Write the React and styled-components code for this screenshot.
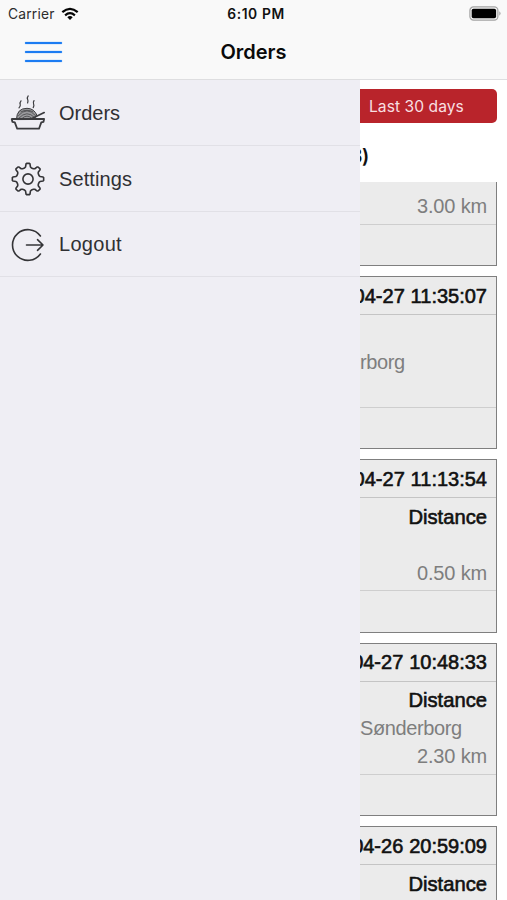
import React from 'react';
import styled, { createGlobalStyle } from 'styled-components';

const GlobalStyle = createGlobalStyle`
    * {
        box-sizing: border-box;
    }
    body {
        margin: 0;
        background-color: white;
        font-family: "Liberation Sans", Arial, sans-serif;
        overflow: hidden;
    }
`;

const Screen = styled.div`
    width: 507px;
    height: 900px;
    display: flex;
    flex-direction: column;
    overflow: hidden;
`;

const Header = styled.header`
    height: 80px;
    flex: none;
    background-color: #f9f9f9;
    border-bottom: 1px solid #dedee0;
    font-family: Inter, sans-serif;
`;

const StatusBar = styled.div`
    height: 27px;
    padding: 0 6px 0 8px;
    display: grid;
    grid-template-columns: 1fr auto 1fr;
    align-items: center;
    color: #111;
`;

const Carrier = styled.div`
    display: flex;
    align-items: center;
    gap: 6px;
    font-size: 13.8px;
    letter-spacing: 0.2px;
    color: #2c2c2c;
`;

const Clock = styled.div`
    font-size: 13.8px;
    font-weight: 600;
    letter-spacing: 0.6px;
    padding-left: 3px;
`;

const BatteryWrap = styled.div`
    display: flex;
    justify-content: flex-end;
`;

const NavBar = styled.div`
    height: 50px;
    padding: 0 25px;
    display: grid;
    grid-template-columns: 1fr auto 1fr;
    align-items: center;
`;

const MenuButton = styled.button`
    width: 37px;
    height: 20px;
    padding: 0;
    border: none;
    background: none;
    display: flex;
    flex-direction: column;
    justify-content: space-between;
`;

const MenuLine = styled.span`
    width: 37px;
    height: 2px;
    border-radius: 1px;
    background-color: #1c7cf2;
    box-shadow: 0 0 1px #1c7cf2;
`;

const Title = styled.h1`
    margin: 0;
    font-size: 20px;
    font-weight: 600;
    letter-spacing: 0;
    color: #0a0a0a;
`;

const Main = styled.div`
    flex: 1;
    min-height: 0;
    display: flex;
`;

const Drawer = styled.nav`
    width: 360px;
    flex: none;
    background-color: #efeef4;
`;

const DrawerItem = styled.a`
    height: ${props => props.$height || 66}px;
    padding: 1px 10px 0;
    display: flex;
    align-items: center;
    gap: 13px;
    border-bottom: 1px solid #e1e0e6;
    color: #303033;
    font-size: 20px;
    letter-spacing: ${props => props.$spacing || 0}px;
    svg {
        flex: none;
    }
`;

const Content = styled.main`
    flex: 1;
    min-width: 0;
    display: flex;
    flex-direction: column;
    overflow: hidden;
    background-color: white;
`;

const RangeButton = styled.button`
    flex: none;
    height: 34px;
    margin: 9px 10px 0 0;
    padding: 0 0 0 9px;
    border: none;
    border-radius: 0 5px 5px 0;
    background-color: #b9242b;
    color: #f8dfe0;
    font-family: Inter, sans-serif;
    font-size: 15.6px;
    letter-spacing: 0.05px;
    text-align: left;
`;

const Count = styled.h2`
    flex: none;
    height: 59px;
    margin: 0 0 0 -10px;
    line-height: 66px;
    font-family: Inter, sans-serif;
    font-size: 19.5px;
    font-weight: 600;
    color: #111;
    letter-spacing: -0.3px;
`;

const List = styled.div`
    flex: 1;
    min-height: 0;
    overflow: hidden;
`;

const Cards = styled.div`
    margin-top: -89.3px;
    padding-right: 10px;
    display: flex;
    flex-direction: column;
    gap: 10px;
`;

const Card = styled.article`
    height: 173.33px;
    flex: none;
    border: solid #7f7f7f;
    border-width: 1px 1px 1px 0;
    background-color: #ebebeb;
    font-size: 20px;
    line-height: 28px;
    text-align: right;
`;

const CardHead = styled.div`
    height: 38px;
    padding-right: 9px;
    border-bottom: 1px solid #c4c4c4;
    display: flex;
    justify-content: flex-end;
    align-items: center;
    white-space: nowrap;
    color: #111;
    font-size: 20px;
    word-spacing: 0.3px;
    -webkit-text-stroke: 0.6px #111;
`;

const CardBody = styled.div`
    height: 93px;
    padding: 4.5px 9px 0 0;
    border-bottom: 1px solid #cecece;
`;

const Label = styled.div`
    height: 28px;
    color: #111;
    font-size: 20.2px;
    -webkit-text-stroke: 0.6px #111;
`;

const Address = styled.div`
    height: 28px;
    color: #7e7e7e;
    text-align: left;
    letter-spacing: -0.4px;
`;

const Distance = styled.div`
    height: 28px;
    color: #7e7e7e;
    letter-spacing: -0.15px;
`;

const WifiIcon = () => (
    <svg width="18" height="14" viewBox="0 0 18 14" fill="none" stroke="#050505" strokeWidth="2.2">
        <path d="M1.3 5.2Q9 -1.5 16.7 5.2" />
        <path d="M4.1 8.3Q9 4.1 13.9 8.3" />
        <path d="M9 13L6.3 10.2Q9 8 11.7 10.2Z" fill="#050505" stroke="none" />
    </svg>
);

const BatteryIcon = () => (
    <svg width="32" height="15" viewBox="0 0 32 15">
        <rect x="0.9" y="0.9" width="28" height="13.2" rx="3.6" fill="#f4f4f4" stroke="#a3a3a3" strokeWidth="1.2" />
        <rect x="2.7" y="2.7" width="24.4" height="9.6" rx="1.8" fill="#000" />
        <path d="M30.4 5.3Q32.6 7.5 30.4 9.7Z" fill="#999" />
    </svg>
);

const FoodIcon = () => (
    <svg width="36" height="36" viewBox="0 0 36 36" fill="none" stroke="#3b3b3e" strokeLinecap="round" strokeLinejoin="round">
        <path d="M11 5.8Q9.6 7.6 10.2 9.2T9 12.8M18.2 0.9Q16.8 2.7 17.6 4.3T17.6 8M24 5.6Q22.8 7.4 23.6 9T23.2 12.6" strokeWidth="1.2" />
        <path d="M6.5 24.2Q6.7 13.3 17 13.3Q24.4 13.5 27 20.5L23.5 24.2Z" fill="#9a9a9d" strokeWidth="1" />
        <path d="M8.5 20.5Q17 11 25.5 20.5M9 23Q17 14.5 24.5 22.5M12 23.5Q17 18.5 22 23.5M11 16.8Q17 13.5 23 16.8" strokeWidth="0.7" />
        <path d="M22 23.6L34.2 17.6" strokeWidth="1.7" />
        <path d="M1.7 24H34.1L33.5 26.8L31.3 27.4L29 33.7H7.2L4.8 27.4L2.4 26.8Z" strokeWidth="1.8" />
    </svg>
);

// eight teeth, built by turning one tooth around the hub
const teeth = [];
for (let i = 0; i < 8; i++) {
    const base = (i * Math.PI) / 4 - Math.PI / 2;
    [[-0.3, 11.6], [-0.2, 12.3], [-0.13, 15.2], [-0.09, 15.7], [0.09, 15.7], [0.13, 15.2], [0.2, 12.3], [0.3, 11.6]].forEach(([turn, r]) => {
        teeth.push(`${(18 + r * Math.cos(base + turn)).toFixed(2)} ${(18 + r * Math.sin(base + turn)).toFixed(2)}`);
    });
}

const GearIcon = () => (
    <svg width="36" height="36" viewBox="0 0 36 36" fill="none" stroke="#343437" strokeWidth="1.6" strokeLinejoin="round">
        <path d={`M${teeth.join('L')}Z`} />
        <circle cx="18" cy="18" r="5.1" />
    </svg>
);

const LogoutIcon = () => (
    <svg width="36" height="36" viewBox="0 0 36 36" fill="none" stroke="#343437" strokeWidth="1.6" strokeLinecap="round" strokeLinejoin="round">
        <path d="M30.4 9A15.4 15.4 0 1 0 30.4 27" />
        <path d="M16.5 18H33M27.5 12.7L33 18L27.5 23.3" />
    </svg>
);

const orders = [
    { time: '', label: '', address: '', distance: '3.00 km' },
    { time: '04-27 11:35:07', label: '', address: 'rborg', distance: '' },
    { time: '04-27 11:13:54', label: 'Distance', address: '', distance: '0.50 km' },
    { time: '04-27 10:48:33', label: 'Distance', address: 'Sønderborg', distance: '2.30 km' },
    { time: '04-26 20:59:09', label: 'Distance', address: '', distance: '' },
];

export default function App() {
    return (
        <Screen>
            <GlobalStyle />
            <Header>
                <StatusBar>
                    <Carrier>
                        Carrier
                        <WifiIcon />
                    </Carrier>
                    <Clock>6:10 PM</Clock>
                    <BatteryWrap>
                        <BatteryIcon />
                    </BatteryWrap>
                </StatusBar>
                <NavBar>
                    <MenuButton>
                        <MenuLine />
                        <MenuLine />
                        <MenuLine />
                    </MenuButton>
                    <Title>Orders</Title>
                </NavBar>
            </Header>
            <Main>
                <Drawer>
                    <DrawerItem>
                        <FoodIcon />
                        Orders
                    </DrawerItem>
                    <DrawerItem $spacing={0.1}>
                        <GearIcon />
                        Settings
                    </DrawerItem>
                    <DrawerItem $height={65} $spacing={0.3}>
                        <LogoutIcon />
                        Logout
                    </DrawerItem>
                </Drawer>
                <Content>
                    <RangeButton>Last 30 days</RangeButton>
                    <Count>3)</Count>
                    <List>
                        <Cards>
                            {orders.map((order, i) => (
                                <Card key={i}>
                                    <CardHead>{order.time}</CardHead>
                                    <CardBody>
                                        <Label>{order.label}</Label>
                                        <Address>{order.address}</Address>
                                        <Distance>{order.distance}</Distance>
                                    </CardBody>
                                </Card>
                            ))}
                        </Cards>
                    </List>
                </Content>
            </Main>
        </Screen>
    );
}
